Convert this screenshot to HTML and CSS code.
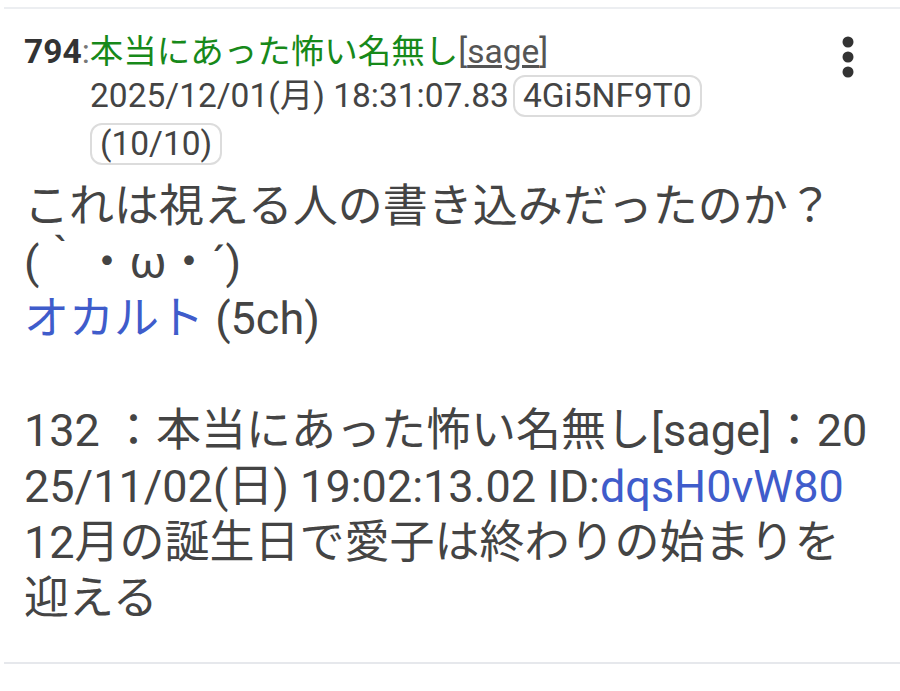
FILE: index.html
```html
<!DOCTYPE html>
<html lang="ja">
<head>
    <meta charset="UTF-8">
    <meta name="viewport" content="width=device-width, initial-scale=1.0">
    <title>794</title>
    <link rel="stylesheet" href="styles.css">
</head>
<body>
    <div class="post">
        <div class="head">
            <div class="info">
                <div class="name-line">
                    <span class="num">794</span><span class="colon">:</span><span class="name">本当にあった怖い名無し</span><span class="mail">[<u>sage</u>]</span>
                </div>
                <div class="meta">
                    <span class="date">2025/12/01(月) 18:31:07.83</span>
                    <span class="badge">4Gi5NF9T0</span>
                    <span class="badge">(10/10)</span>
                </div>
            </div>
            <button class="menu" type="button">
                <svg width="12" height="42" viewBox="0 0 12 42">
                    <circle cx="6" cy="6" r="5.5" fill="#333"/>
                    <circle cx="6" cy="21" r="5.5" fill="#333"/>
                    <circle cx="6" cy="36" r="5.5" fill="#333"/>
                </svg>
            </button>
        </div>
        <div class="body">
            これは視える人の書き込みだったのか？<br>
            (｀・ω・´)<br>
            <a href="#" class="link">オカルト</a> (5ch)<br>
            <br>
            132 ：本当にあった怖い名無し[sage]：2025/11/02(日) 19:02:13.02 ID:<a href="#" class="link">dqsH0vW80</a><br>
            12月の誕生日で愛子は終わりの始まりを迎える
        </div>
    </div>
</body>
</html>
```

FILE: styles.css
```css
body {
    font-family: Roboto, "Noto Sans CJK JP", sans-serif;
    background-color: #fff;
    color: #444;
    margin: 0;
    padding: 0;
}
.post {
    margin: 7px 0 0 4px;
    padding: 21px 24px 35px 20px;
    border-top: 2px solid #eceef1;
    border-bottom: 2px solid #e6e8ec;
}
.head {
    display: flex;
    align-items: flex-start;
}
.info {
    flex: 1;
    font-size: 33.5px;
}
.name-line {
    line-height: 44px;
}
.num {
    font-weight: bold;
    color: #333;
}
.colon {
    color: #777;
}
.name {
    color: #17891a;
}
.mail {
    color: #555;
}
.meta {
    display: flex;
    flex-wrap: wrap;
    align-items: center;
    column-gap: 4px;
    row-gap: 6px;
    margin-left: 66px;
    margin-top: 1px;
    margin-right: 40px;
}
.date {
    line-height: 40px;
}
.badge {
    border: 2px solid #dcdcdc;
    border-radius: 12px;
    padding: 0 8px;
    line-height: 38px;
}
.menu {
    border: none;
    background: none;
    padding: 0;
    margin: 6px 22px 0 0;
    cursor: pointer;
    display: flex;
}
.body {
    font-size: 45px;
    line-height: 56px;
    margin-top: 14px;
    word-break: break-all;
}
.link {
    color: #3f5ccb;
    text-decoration: none;
}
```
